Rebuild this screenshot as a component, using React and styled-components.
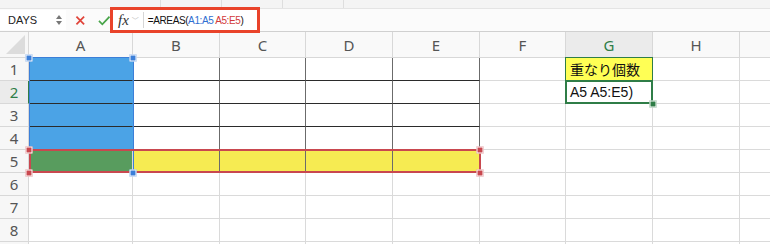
import React from "react";
import styled, { createGlobalStyle } from "styled-components";

const GlobalStyle = createGlobalStyle`
  html, body {
    margin: 0;
    padding: 0;
    background: #ffffff;
    font-family: "Liberation Sans", "Noto Sans CJK JP", sans-serif;
    overflow: hidden;
  }
`;

const COLS = ["A", "B", "C", "D", "E", "F", "G", "H", ""];
const WIDTHS = [104, 87, 86, 87, 87, 86, 87, 87, 87];
const ROW_H = 23;
const HEAD_W = 29;
const HEAD_H = 26;

const Page = styled.div`
  width: 770px;
  height: 244px;
  overflow: hidden;
  background: #fff;
`;

const Ribbon = styled.div`
  height: 8px;
  background: #f4f4f4;
  display: flex;
  gap: 60px;
  padding-left: 160px;
`;

const RibbonTick = styled.div`
  width: 1px;
  height: 8px;
  background: #dedede;
`;

const FormulaBar = styled.div`
  height: 22px;
  display: flex;
  align-items: center;
  background: #fbfbfb;
  border-top: 1px solid #e4e4e4;
  border-bottom: 1px solid #d0d0d0;
`;

const NameBox = styled.div`
  width: 66px;
  height: 20px;
  display: flex;
  align-items: center;
  justify-content: space-between;
  padding: 0 4px 0 8px;
  box-sizing: border-box;
  background: #fff;
  font-size: 11px;
  color: #222;
`;

const Stepper = styled.div`
  display: flex;
  flex-direction: column;
  align-items: center;
  gap: 2px;
`;

const Tri = styled.span`
  width: 0;
  height: 0;
  border-left: 3px solid transparent;
  border-right: 3px solid transparent;
  ${(p) => (p.$up ? "border-bottom: 4px solid #777;" : "border-top: 4px solid #777;")}
`;

const Actions = styled.div`
  display: flex;
  align-items: center;
  gap: 12px;
  padding-left: 9px;
  width: 44px;
  box-sizing: border-box;
`;

const FormulaWrap = styled.div`
  position: relative;
  z-index: 2;
  display: flex;
  align-items: center;
  height: 26px;
  box-sizing: border-box;
  border: 3px solid #e9432a;
  padding: 0 14px 0 5px;
  background: #fff;
`;

const Fx = styled.span`
  font-family: "Liberation Serif", serif;
  font-style: italic;
  font-size: 15px;
  color: #333;
`;

const Chevron = styled.span`
  margin: 0 4px 0 3px;
  color: #bbb;
  font-size: 7px;
`;

const Divider = styled.span`
  width: 1px;
  height: 16px;
  background: #d6d6d6;
  margin-right: 4px;
`;

const Formula = styled.span`
  font-size: 10px;
  letter-spacing: -0.4px;
  color: #111;
  white-space: nowrap;
`;

const Ref = styled.span`
  color: ${(p) => p.$color};
`;

const SheetWrap = styled.div`
  position: relative;
`;

const Sheet = styled.div`
  display: grid;
  grid-template-columns: ${HEAD_W}px ${WIDTHS.map((w) => w + "px").join(" ")};
  grid-template-rows: ${HEAD_H}px repeat(9, ${ROW_H}px);
`;

const Corner = styled.div`
  background: #f7f7f7;
  border-right: 1px solid #d8d8d8;
  border-bottom: 1px solid #d8d8d8;
  position: relative;
  &::after {
    content: "";
    position: absolute;
    right: 3px;
    bottom: 3px;
    border-left: 19px solid transparent;
    border-bottom: 19px solid #dcdcdc;
  }
`;

const ColHead = styled.div`
  display: flex;
  align-items: center;
  justify-content: center;
  font-family: "Noto Sans", sans-serif;
  font-size: 15px;
  color: ${(p) => (p.$active ? "#2f7d47" : "#555")};
  background: ${(p) => (p.$active ? "#ebebeb" : "#f9f9f9")};
  border-right: 1px solid #d8d8d8;
  border-bottom: 1px solid ${(p) => (p.$active ? "#2f7d47" : "#d8d8d8")};
  box-sizing: border-box;
`;

const RowHead = styled.div`
  display: flex;
  align-items: center;
  justify-content: center;
  font-family: "Noto Sans", sans-serif;
  font-size: 15px;
  color: ${(p) => (p.$active ? "#2f7d47" : "#555")};
  background: ${(p) => (p.$active ? "#ebebeb" : "#f7f7f7")};
  border-right: 1px solid ${(p) => (p.$active ? "#2f7d47" : "#d8d8d8")};
  border-bottom: 1px solid #d8d8d8;
  box-sizing: border-box;
`;

const Cell = styled.div`
  box-sizing: border-box;
  display: flex;
  align-items: center;
  padding-left: 4px;
  font-size: 14px;
  font-family: "Liberation Sans", "Noto Sans CJK JP", sans-serif;
  color: #111;
  background: ${(p) => p.$bg || "#fff"};
  border-right: 1px solid ${(p) => p.$right || "#dadada"};
  border-bottom: 1px solid ${(p) => p.$bottom || "#dadada"};
`;

const Selection = styled.div`
  position: absolute;
  box-sizing: border-box;
  border: ${(p) => p.$w}px solid ${(p) => p.$color};
  pointer-events: none;
`;

const Handle = styled.div`
  position: absolute;
  width: 5px;
  height: 5px;
  background: ${(p) => p.$color};
  border: 1px solid #fff;
  transform: translate(-50%, -50%);
`;

const colX = (i) => HEAD_W + WIDTHS.slice(0, i).reduce((a, b) => a + b, 0);
const rowY = (r) => HEAD_H + (r - 1) * ROW_H;

const cellProps = (c, r) => {
  const p = {};
  if (r <= 5 && c <= 4) {
    if (c >= 1) p.$right = "#6b6b6b";
    if (r <= 3) p.$bottom = "#2b2b2b";
  }
  if (c === 0 && r <= 4) {
    p.$bg = "#4ba3e6";
    p.$right = "#4ba3e6";
  }
  if (r === 5 && c === 0) p.$bg = "#589c5e";
  if (r === 5 && c >= 1 && c <= 4) p.$bg = "#f6eb52";
  if (c === 6 && r === 1) p.$bg = "#ffff55";
  return p;
};

const cellText = { "6-1": "重なり個数", "6-2": "A5 A5:E5)" };

export default function App() {
  const rows = [1, 2, 3, 4, 5, 6, 7, 8, 9];
  return (
    <Page>
      <GlobalStyle />
      <Ribbon>
        <RibbonTick />
        <RibbonTick />
        <RibbonTick />
        <RibbonTick />
      </Ribbon>
      <FormulaBar>
        <NameBox>
          DAYS
          <Stepper>
            <Tri $up />
            <Tri />
          </Stepper>
        </NameBox>
        <Actions>
          <svg width="11" height="11" viewBox="0 0 11 11">
            <path d="M1.5 1.5 L9.5 9.5 M9.5 1.5 L1.5 9.5" stroke="#e0443a" strokeWidth="1.8" />
          </svg>
          <svg width="13" height="11" viewBox="0 0 13 11">
            <path d="M1 6 L4.5 9.5 L12 1.5" stroke="#49a54a" strokeWidth="1.8" fill="none" />
          </svg>
        </Actions>
        <FormulaWrap>
          <Fx>fx</Fx>
          <Chevron>﹀</Chevron>
          <Divider />
          <Formula>
            =AREAS(<Ref $color="#2f6fd1">A1:A5</Ref> <Ref $color="#d23a3a">A5:E5</Ref>)
          </Formula>
        </FormulaWrap>
      </FormulaBar>
      <SheetWrap>
        <Sheet>
          <Corner />
          {COLS.map((c, i) => (
            <ColHead key={i} $active={c === "G"}>
              {c}
            </ColHead>
          ))}
          {rows.map((r) => (
            <React.Fragment key={r}>
              <RowHead $active={r === 2}>{r < 9 ? r : ""}</RowHead>
              {COLS.map((c, i) => (
                <Cell key={i} {...cellProps(i, r)}>
                  {cellText[`${i}-${r}`]}
                </Cell>
              ))}
            </React.Fragment>
          ))}
        </Sheet>
        <Selection
          $w={1}
          $color="#3c7fd8"
          style={{ left: colX(0), top: rowY(1) - 1, width: WIDTHS[0] + 1, height: ROW_H * 5 + 1 }}
        />
        <Selection
          $w={2}
          $color="#c9484f"
          style={{ left: colX(0), top: rowY(5) - 1, width: colX(5) - colX(0) + 1, height: ROW_H + 1 }}
        />
        <Selection
          $w={1}
          $color="#2f7d47"
          style={{ left: colX(6) - 1, top: rowY(1) - 1, width: WIDTHS[6] + 1, height: ROW_H + 1 }}
        />
        <Selection
          $w={2}
          $color="#2f7d47"
          style={{ left: colX(6) - 1, top: rowY(2) - 1, width: WIDTHS[6] + 1, height: ROW_H + 1 }}
        />
        <Handle $color="#3c7fd8" style={{ left: colX(0), top: rowY(1) }} />
        <Handle $color="#3c7fd8" style={{ left: colX(1), top: rowY(1) }} />
        <Handle $color="#c9484f" style={{ left: colX(0), top: rowY(5) }} />
        <Handle $color="#c9484f" style={{ left: colX(0), top: rowY(6) }} />
        <Handle $color="#c9484f" style={{ left: colX(5), top: rowY(5) }} />
        <Handle $color="#c9484f" style={{ left: colX(5), top: rowY(6) }} />
        <Handle $color="#3c7fd8" style={{ left: colX(1), top: rowY(6) }} />
        <Handle $color="#2f7d47" style={{ left: colX(7), top: rowY(3) }} />
      </SheetWrap>
    </Page>
  );
}
